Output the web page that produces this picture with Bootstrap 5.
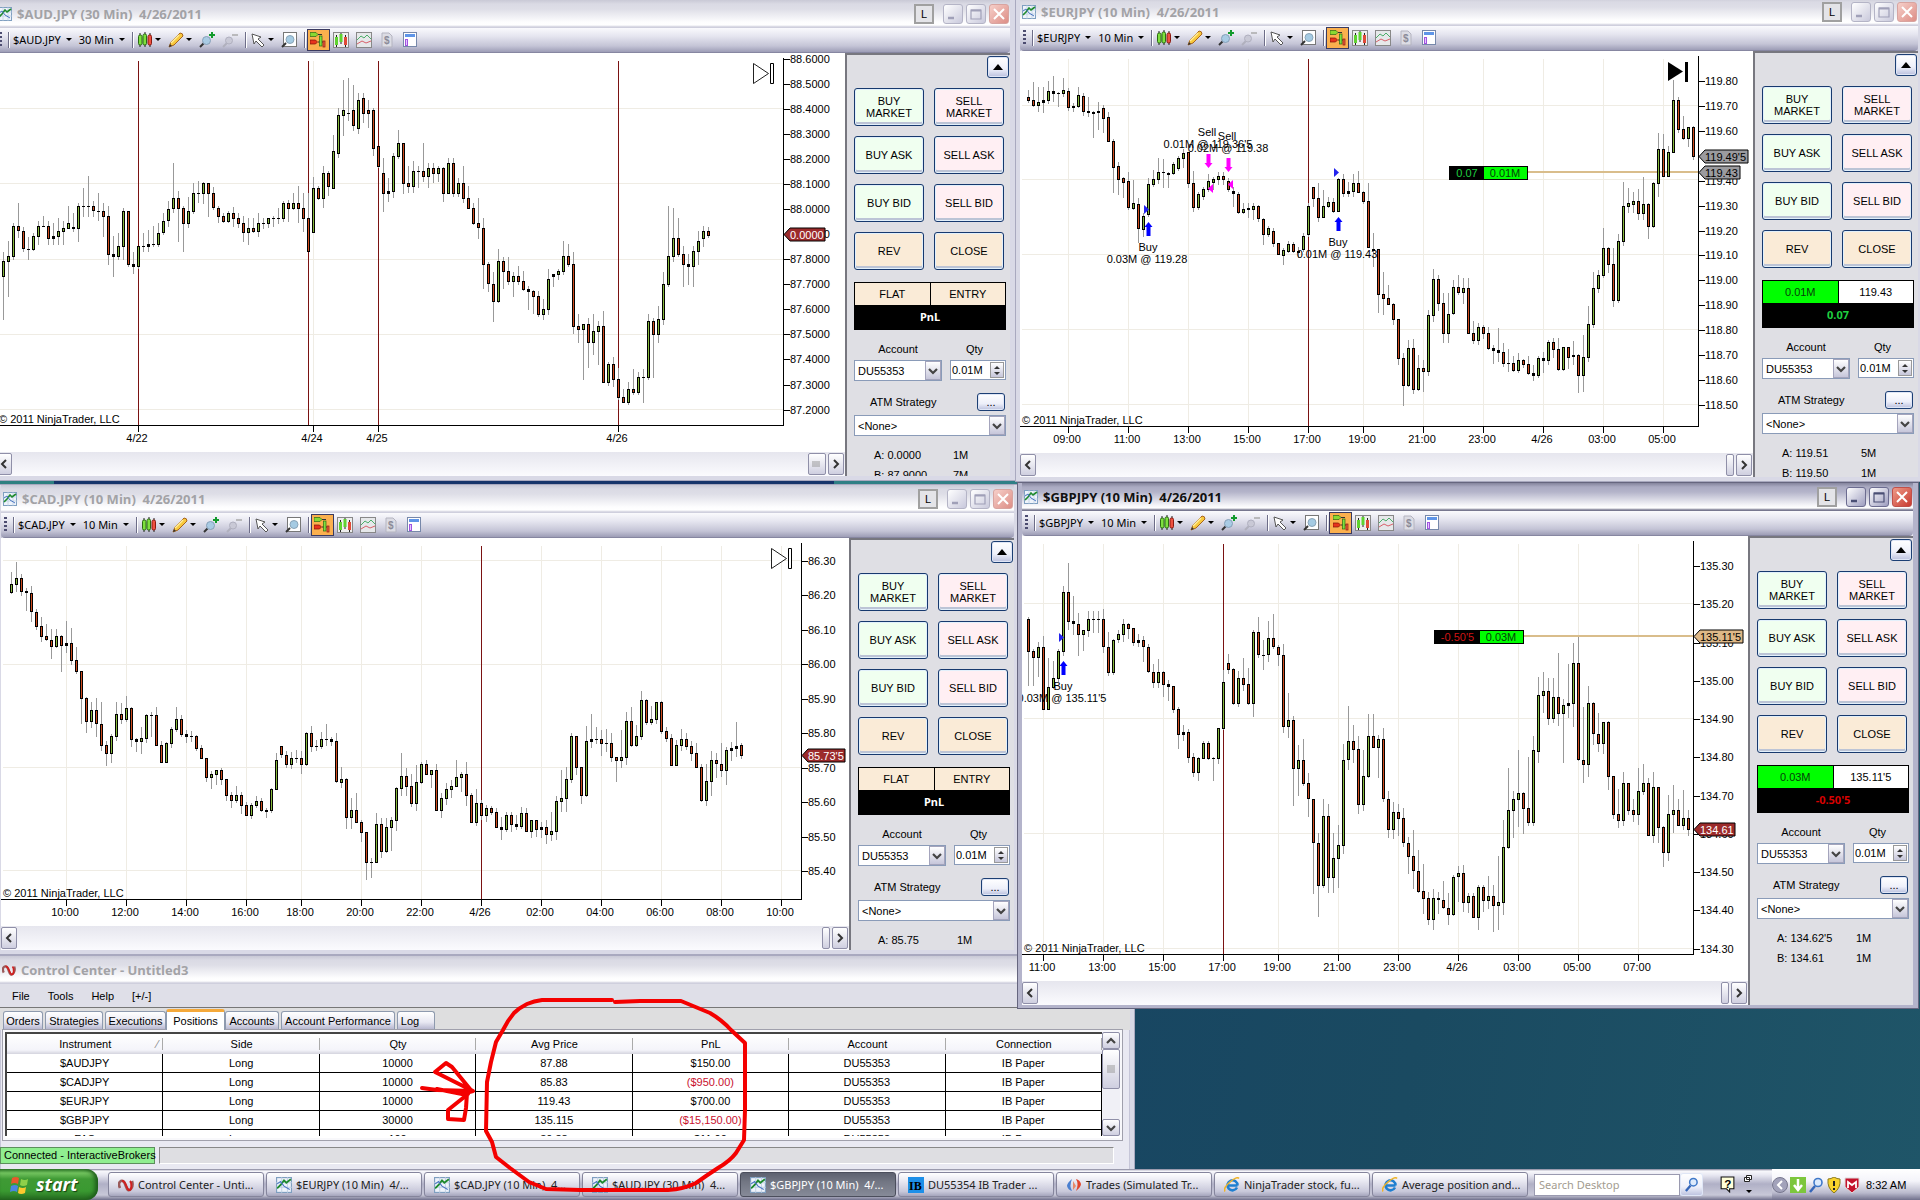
<!DOCTYPE html>
<html lang="en">
<head>
<meta charset="utf-8">
<meta name="viewport" content="width=device-width, initial-scale=1">
<title>Trading desktop</title>
<link href="https://cdn.jsdelivr.net/npm/bootstrap@5.3.0/dist/css/bootstrap.min.css" rel="stylesheet">
<style>
html,body{height:100%}
body{font:11px/12px "Liberation Sans",Arial,sans-serif;color:#000;background:#1c5168}
.desk{background:linear-gradient(100deg,#2e8080 0%,#2f7f86 52%,#184662 60%,#1a4a61 75%,#1f5568 100%)}
.strip{top:480px;left:54px;width:calc(50% - 180px);height:4px;background:#16346a}
.win{position:absolute;background:#e9e9f2;border:solid #d9d9e6;border-width:0 5px 4px 4px;box-shadow:inset 0 0 0 1px #c6c6d8,0 0 0 1px #a9a9bf}
.w-aud{left:-8px;top:0;width:calc(50% + 63px)}
.w-eur{left:calc(50% + 56px);top:-2px;right:-3px}
.w-cad{left:-3px;top:485px;width:calc(50% + 62px)}
.w-gbp{left:calc(50% + 58px);top:483px;right:2px;border-color:#b4b4cb;border-bottom-width:3px;box-shadow:0 0 0 1px #66667f}
.w-cc{left:0;top:956px;width:calc(50% + 174px);border-width:0 4px 0 0}
.tbar{height:28px;padding:0 1px 0 2px;background:linear-gradient(#c9c9d6 0,#dadae4 4px,#dedee7 9px,#fdfdfe 22px,#fff 25px,#cfcfdd 27px)}
.w-gbp .tbar{background:linear-gradient(#84849d 0,#aaaac2 4px,#b4b4ca 9px,#f4f4f8 22px,#fff 25px,#77778f 27px)}
.ttl{font:bold 13px/18px "Open Sans","Noto Sans",sans-serif;color:#a2a2a6;white-space:nowrap}
.w-gbp .ttl{color:#111}
.tico{width:14px;height:14px;margin-right:5px;flex:none}
.wbtn{width:20px;height:20px;padding:0;border:1px solid #b4b4c6;border-radius:3px;background:linear-gradient(135deg,#fff,#c9c9dc);color:#a0a0b8;display:flex;align-items:center;justify-content:center}
.wbtn svg{width:16px;height:16px}
.wbtn.lk{border:2px solid #a0a0a0;border-radius:0;background:#e4e4e8;color:#000;font-size:11px;margin-right:6px}
.wbtn.cls{background:linear-gradient(135deg,#f6cfc9,#dd8e86);border-color:#d8a4a0;color:#fff}
.w-gbp .wbtn:not(.lk){color:#4a4f74;border-color:#6c6c90;background:linear-gradient(135deg,#fff,#9d9dbf)}
.w-gbp .wbtn.cls{background:linear-gradient(135deg,#ee9a88,#c83a30);border-color:#c0504a;color:#fff}
.tools{height:25px;padding:0 0 2px 3px;background:linear-gradient(#fafafd 0,#e6e6f0 8px,#c4c4d6 18px,#9d9db6 24px,#70708c 25px);border-radius:0 0 4px 4px}
.tools button{border:0;background:none;padding:0;margin-right:7px;display:flex;align-items:center;color:#000;white-space:nowrap;font:11px/14px "Noto Sans","Open Sans",sans-serif}
.tools svg{width:16px;height:16px;display:block}
.tools .crt{width:0;height:0;border:3px solid transparent;border-top-color:#000;border-bottom:0;margin-left:2px}
.tools .txt .crt{margin-left:5px}
.tools .on{background:#fbb04e;border:1px solid #3a3a60;width:23px;height:22px;justify-content:center;margin-right:3px}
.vsep{width:2px;height:16px;margin-right:3px;border-left:1px solid #6d6d88;border-right:1px solid #fff}
.vsep.tight{margin-right:1px}
.grip{width:3px;height:15px;margin-right:6px;background:repeating-linear-gradient(#4c4c70 0 2px,transparent 2px 4px)}
.plot{display:block;width:100%;background:#fff}
.plot text{font:11px "Liberation Sans",Arial,sans-serif}
.hsb{height:24px;background:linear-gradient(#e6e6ee,#fbfbfe);gap:2px;padding-right:1px}
.sbb{border:1px solid #8f8fa8;border-radius:2px;background:linear-gradient(#fff,#cfcfe0);width:16px;height:22px;padding:0;display:flex;align-items:center;justify-content:center}
.sbb svg{width:10px;height:10px}
.thumb{width:8px}
.thumb.wide{width:18px}
.pnl-side{width:165px;flex:none;overflow:hidden;background:#dfdfe4;border-left:2px solid #77777f;border-top:2px solid #77777f;position:relative}
.pscroll{position:absolute;inset:1px 0 auto 7px}
.xpb{border:1px solid #1c3f74;border-radius:3px;background:linear-gradient(#fff,#eef0fa 60%,#b9bfdd);padding:0;box-shadow:inset 0 0 0 1px #dfe6f6}
.upb{width:22px;height:22px;margin-left:133px;display:flex;align-items:center;justify-content:center}
.ogrid{display:grid;grid-template-columns:70px 70px;gap:10px;margin-top:10px}
.obtn{height:38px;border:1px solid #17396e;border-radius:3px;padding:0;font-size:11px;line-height:12px;color:#000;box-shadow:inset 0 0 0 1px #e2f0fb,inset 0 -2px 0 1px #bcc4d6}
.buy{background:#f0fff0}.sell{background:#ffeff3}.wht{background:#faebd7}
.pos{width:152px;margin-top:12px;border:1px solid #000;text-align:center}
.pos>div>div{height:22px;line-height:22px;flex:1}
.pos>div>div+div{border-left:1px solid #000}
.pos .tot{background:#000;color:#fff;font:bold 11px/24px "Noto Sans","Open Sans",sans-serif;height:24px}
.lime{background:#0f0;color:#06410a}
.lb{line-height:14px}
.sel{position:relative}
.sel select,.qty input{appearance:none;width:100%;height:21px;border:1px solid #8a9bb8;border-radius:0;background:#fff;padding:0 0 0 3px;font-size:11px;line-height:14px;color:#000;display:block}
.sel i,.spin{position:absolute;right:1px;top:1px;width:16px;height:19px;border:1px solid #a4a4bc;background:linear-gradient(#fff,#c6c6da);pointer-events:none;display:flex;align-items:center;justify-content:center}
.sel svg{width:10px;height:10px}
.qty{position:relative;width:56px}
.qty input{height:20px;padding-left:1px}
.spin{top:2px;right:2px;width:14px;height:16px;border-color:#999;flex-direction:column;gap:3px}
.spin b{border:3px solid transparent;border-bottom-color:#333;border-top:0}
.spin b+b{border:3px solid transparent;border-top-color:#333;border-bottom:0}
.dots{width:28px;height:18px;line-height:10px}
.quote{display:grid;grid-template-columns:79px 40px;padding-left:20px;row-gap:6px;line-height:14px}
.menu{height:24px;padding-left:12px;background:#dfdfe8;border-bottom:1px solid #777;gap:18px}
.menu a{color:#000;text-decoration:none}
.tabs{height:22px;padding:3px 0 0 3px;gap:2px;background:#dededf}
.tabs button{height:18px;border:1px solid #8e9aae;border-bottom:0;border-radius:3px 3px 0 0;background:linear-gradient(#fff,#e8e8f2 60%,#b8b8d0);padding:0;text-align:center;white-space:nowrap}
.tabs .act{height:21px;margin:-2px -2px 0;border-top:3px solid #f5a93a;background:#fff;position:relative}
.gbox{margin:0 8px 0 3px;border:2px solid #f8f8fb;outline:1px solid #a0a0ac;height:110px;overflow:hidden;background:#fff}
.gin{border:solid #444;border-width:2px 0 0 2px;height:104px;overflow:hidden}
.pt{width:100%;table-layout:fixed;border-collapse:separate;border-spacing:0;text-align:center}
.pt th{font-weight:400;height:20px;padding:0;background:linear-gradient(#fff,#f4f4fa 80%,#d4d4de);position:relative}
.pt th::after{content:"";position:absolute;right:0;top:4px;height:12px;border-right:1px solid #aaa}
.pt th:first-child::before{content:"⁄";position:absolute;right:5px;color:#888}
.pt td{height:19px;padding:0;border:solid #000;border-width:0 1px 1px 0}
.pt .neg{color:#c8102e}
.vsb{width:18px;background:#f0f0f6;flex:none;height:104px}
.vsb .sbb{height:17px;width:18px}
.vsb .vt{height:40px}
.stat{height:17px;margin-top:7px}
.stat .ok{background:#90ee90;width:155px;padding-left:3px;line-height:15px;border:1px solid #5c8f5c;white-space:nowrap;flex:none}
.stat .rest{border:1px solid #888;border-right-color:#fff;border-bottom-color:#fff;background:#dedee2}
.bar{position:fixed;left:0;right:0;bottom:0;height:31px;background:linear-gradient(#7c7c94 0,#f8f8fc 2px,#e8e8f2 6px,#b0b0c6 15px,#c8c8d8 26px,#70708c 31px)}
.start{width:98px;height:31px;border:0;border-radius:0 12px 12px 0;background:linear-gradient(#3c8a34 0,#73c45f 4px,#3f9a35 10px,#3a9931 22px,#256a20 31px);box-shadow:inset -3px 0 4px #1d5b1a;color:#fff;font:italic bold 18px/24px "Open Sans",sans-serif;text-shadow:1px 1px 1px #144012;display:flex;align-items:center;gap:6px;padding:0 0 2px 10px;margin-right:10px;flex:none}
.start svg{width:20px;height:20px}
.task{flex:0 1 156px;min-width:0;height:25px;margin:3px 2px 0 0;border:1px solid #85859c;border-radius:3px;background:linear-gradient(#fff,#ececf4 30%,#c8c8da 80%,#a5a5bc);display:flex;align-items:center;gap:4px;padding:0 0 0 9px;white-space:nowrap;overflow:hidden;color:#222;font:11px/14px "Noto Sans","Open Sans",sans-serif}
.task svg{width:16px;height:16px;flex:none}
.task.cur{background:linear-gradient(#5d6170,#737784 40%,#868a98);color:#fff;border-color:#4b4e5c}
.srch{width:146px;height:22px;border:1px solid #9a9ab0;background:#fff;padding:0 4px;font:11px/14px "Noto Sans","Open Sans",sans-serif}
.srch::placeholder{color:#a39c90;opacity:1}
.tray{width:148px;height:31px;margin-left:auto;background:linear-gradient(#fff,#f4f4fa 12px,#b9b9cc 24px,#70708c);gap:2px;white-space:nowrap}
.tray svg{width:16px;height:16px}
.ink{position:fixed;inset:0;width:100%;height:100%;pointer-events:none;z-index:50}
</style>
<script src="https://cdn.jsdelivr.net/npm/bootstrap@5.3.0/dist/js/bootstrap.bundle.min.js"></script>
</head>
<body class="overflow-hidden">
<svg class="d-none">
<symbol id="chart" viewBox="0 0 14 14"><rect x=".5" y=".5" width="13" height="13" fill="#eef3fb" stroke="#7f9fc0"/><path d="M0 5h14M0 9h14M5 0v14M10 0v14" stroke="#b8cbe0" stroke-width=".7"/><path d="M1 10l3-3 3-4 2 2 4-3" fill="none" stroke="#1f8a2e" stroke-width="1.6"/><path d="M1 6l3-2 3 4 5 3" fill="none" stroke="#4b76c2"/></symbol>
<symbol id="cand" viewBox="0 0 16 16"><path d="M3 1v14M8 0v15M13 1v14" stroke="#222"/><rect x="1.500" y="3" width="3.500" height="10" rx="1.500" fill="#7ee03e" stroke="#2b6b12"/><rect x="6" y="2" width="3.500" height="11" rx="1.500" fill="#7ee03e" stroke="#2b6b12"/><rect x="11" y="3" width="3.500" height="10" rx="1.500" fill="#ef5040" stroke="#8a1a10"/></symbol>
<symbol id="pen" viewBox="0 0 16 16"><path d="M1 15l2-5L12 1q3 0 3 3L6 13z" fill="#f8c93e" stroke="#a8641c"/><path d="M3 11l8-8" stroke="#fff0a0" stroke-width="1.500"/><path d="M1 15l1-3 2 2z" fill="#333"/></symbol>
<symbol id="zin" viewBox="0 0 16 16"><path d="M1 15l4-4" stroke="#333" stroke-width="2"/><circle cx="7.500" cy="8.500" r="4" fill="#a9cbe4" stroke="#86a0b8"/><path d="M13 0v6M10 3h6" stroke="#129a2c" stroke-width="2"/></symbol>
<symbol id="zout" viewBox="0 0 16 16"><path d="M1 15l4-4" stroke="#b0b0bd" stroke-width="2"/><circle cx="7" cy="8.500" r="3.500" fill="#c9c9d6" stroke="#b0b0bf"/><path d="M10 3h6" stroke="#aaa" stroke-width="1.500"/></symbol>
<symbol id="cur" viewBox="0 0 16 16"><path d="M2 2l9 3-3 2 6 6-2 2-6-6-2 3z" fill="#fff" stroke="#555"/></symbol>
<symbol id="page" viewBox="0 0 16 16"><rect x="2.500" y=".5" width="13" height="14" fill="#fff" stroke="#777"/><path d="M1 15l4-4" stroke="#333" stroke-width="2"/><circle cx="9" cy="7.500" r="4" fill="#a5cbe3" stroke="#8aa4b8"/></symbol>
<symbol id="trade" viewBox="0 0 16 16"><path d="M0 .5h6l2 2-2 2H0z" fill="#8ad832" stroke="#2a6a10" stroke-width=".7"/><path d="M0 8h5.500l2 2-2 2H0z" fill="#e8331c" stroke="#7a1208" stroke-width=".7"/><path d="M8 2.500h4M8 10h5" stroke="#333"/><rect x="9.500" y="4" width="2.500" height="10" fill="#7ee03e" stroke="#2b6b12" stroke-width=".7"/><rect x="13" y="9" width="2" height="6" fill="#ef6040" stroke="#8a1a10" stroke-width=".7"/></symbol>
<symbol id="cbox" viewBox="0 0 16 16"><rect x=".5" y=".5" width="15" height="15" fill="#eee" stroke="#888"/><path d="M3.500 3v12M8 1v11M12.500 3v12" stroke="#222"/><rect x="2" y="5" width="3" height="8" fill="#5fd230"/><rect x="6.500" y="2" width="3" height="8" fill="#5fd230"/><rect x="11" y="5" width="3" height="8" fill="#e04a38"/></symbol>
<symbol id="lines" viewBox="0 0 16 16"><rect x=".5" y=".5" width="15" height="15" fill="#e6e8ea" stroke="#888"/><path d="M1 8l4-4 3 2 3-3 4 4" fill="none" stroke="#4cae6a"/><path d="M1 12l5-3 4 2 5-2" fill="none" stroke="#d8606a"/></symbol>
<symbol id="dol" viewBox="0 0 16 16"><path d="M3 1h7l3 3v11H3z" fill="#dcdce4" stroke="#b4b4c0"/><text x="5" y="12" font-size="10" font-weight="bold" fill="#8b8b98" font-family="Liberation Sans">$</text></symbol>
<symbol id="lay" viewBox="0 0 16 16"><rect x="1.500" y=".5" width="13" height="14" fill="#fff" stroke="#7788aa"/><rect x="3" y="2" width="10" height="3" fill="#5f95e8"/><rect x="3.500" y="7.500" width="2" height="6" fill="#e6c6ff" stroke="#a054e0"/></symbol>
<symbol id="cl" viewBox="0 0 10 10"><path d="M7 1L3 5l4 4" fill="none" stroke="#333" stroke-width="2"/></symbol>
<symbol id="cr" viewBox="0 0 10 10"><path d="M3 1l4 4-4 4" fill="none" stroke="#333" stroke-width="2"/></symbol>
<symbol id="cd" viewBox="0 0 10 10"><path d="M1 3l4 4 4-4" fill="none" stroke="#444" stroke-width="2.200"/></symbol>
<symbol id="cu" viewBox="0 0 10 10"><path d="M1 7l4-4 4 4" fill="none" stroke="#444" stroke-width="2.200"/></symbol>
<symbol id="mn" viewBox="0 0 16 16"><path d="M3 12h6" stroke="currentColor" stroke-width="2.500"/></symbol>
<symbol id="mx" viewBox="0 0 16 16"><path d="M3 4h10v9H3z" fill="none" stroke="currentColor" stroke-width="1.200"/><path d="M3 4.500h10" stroke="currentColor" stroke-width="2"/></symbol>
<symbol id="x" viewBox="0 0 16 16"><path d="M3 3l10 10M13 3L3 13" stroke="currentColor" stroke-width="2"/></symbol>
<symbol id="nt" viewBox="0 0 16 16"><path d="M2 11C-1 5 4 2 6 5s2 7 4 8 6-3 4-9" fill="none" stroke="#9a5a5a" stroke-width="2.600"/><path d="M4 4c4-1 4 8 7 9s3-7 1-9" fill="none" stroke="#d02020" stroke-width="2"/></symbol>
<symbol id="ie" viewBox="0 0 16 16"><path d="M13.500 8.500H4.500M13 10.500a5 5 0 1 1 .5-2" fill="none" stroke="#1f7fd0" stroke-width="2.600"/><path d="M1 14.500Q-1 11 6 5T15 1.500" fill="none" stroke="#f0b429" stroke-width="1.600"/></symbol>
<symbol id="ib" viewBox="0 0 16 16"><rect width="16" height="16" fill="#1d8fe8"/><text x="1" y="13" font-size="12" font-weight="bold" font-family="Liberation Serif">IB</text></symbol>
<symbol id="tr" viewBox="0 0 16 16"><path d="M6 2q-5 4-5 7 1 4 5 5-3-5 0-12z" fill="#4a7fd0"/><path d="M10 14q5-4 5-7-1-4-5-5 3 5 0 12z" fill="#e2452c"/><path d="M7 4l3 5-3 4z" fill="#e8896a"/></symbol>
<symbol id="win" viewBox="0 0 20 20"><path d="M2 4q4-2 7 0l-1 6q-4-2-7 0z" fill="#e8582c"/><path d="M11 5q4 2 7 0l-1 6q-4 2-7 0z" fill="#8fd04a"/><path d="M1 12q4-2 7 0l-1 6q-3-2-7 0z" fill="#4a86e0"/><path d="M9 13q4 2 7 0l-1 6q-4 2-7 0z" fill="#fcc92e"/></symbol>
<symbol id="lens" viewBox="0 0 16 16"><path d="M2 15l5-6" stroke="#3566b8" stroke-width="2.500"/><circle cx="10" cy="5.500" r="4" fill="#dceafc" stroke="#3f78c8" stroke-width="1.600"/></symbol>
<symbol id="hlp" viewBox="0 0 16 16"><path d="M2 1h12v11h-4v3l-3-3H2z" fill="#ffffd8" stroke="#111"/><text x="5" y="11" font-size="11" font-weight="bold" font-family="Liberation Sans">?</text></symbol>
<symbol id="chv" viewBox="0 0 16 16"><circle cx="8" cy="8" r="7.500" fill="#a2a2ba" stroke="#77778e"/><path d="M10 4L6 8l4 4" fill="none" stroke="#fff" stroke-width="2"/></symbol>
<symbol id="dn" viewBox="0 0 16 16"><rect width="16" height="16" fill="#7cc63c"/><path d="M8 2v9M4 8l4 5 4-5" stroke="#fff" stroke-width="2.500" fill="none"/></symbol>
<symbol id="shy" viewBox="0 0 16 16"><path d="M8 0q3 2 6 2 1 9-6 14Q1 11 2 2q3 0 6-2z" fill="#f8d22c" stroke="#8a7a1c"/><path d="M8 4v5M8 11v2" stroke="#222" stroke-width="2"/></symbol>
<symbol id="shm" viewBox="0 0 16 16"><path d="M1 1h14v9l-7 6-7-6z" fill="#c4122c" stroke="#ddd"/><path d="M4 11V5l4 3 4-3v6" fill="none" stroke="#fff" stroke-width="1.800"/></symbol>
</svg>

<main class="desk position-relative vh-100 overflow-hidden" id="desk">
<div class="strip position-absolute"></div>
<section class="win w-cc">
 <header class="tbar d-flex align-items-center"><svg class="tico"><use href="#nt"/></svg><span class="ttl">Control Center - Untitled3</span></header>
 <nav class="menu d-flex align-items-center"><a href="#">File</a><a href="#">Tools</a><a href="#">Help</a><a href="#">[+/-]</a></nav>
 <div class="tabs d-flex">
  <button style="width:40px">Orders</button><button style="width:58px">Strategies</button><button style="width:61px">Executions</button><button class="act" style="width:59px">Positions</button><button style="width:54px">Accounts</button><button style="width:114px">Account Performance</button><button style="width:38px;padding-right:12px">Log</button>
 </div>
 <div class="gbox d-flex"><div class="gin flex-fill"><table class="pt"><thead><tr><th>Instrument</th><th>Side</th><th>Qty</th><th>Avg Price</th><th>PnL</th><th>Account</th><th>Connection</th></tr></thead>
 <tbody>
 <tr><td>$AUDJPY</td><td>Long</td><td>10000</td><td>87.88</td><td>$150.00</td><td>DU55353</td><td>IB Paper</td></tr>
 <tr><td>$CADJPY</td><td>Long</td><td>10000</td><td>85.83</td><td class="neg">($950.00)</td><td>DU55353</td><td>IB Paper</td></tr>
 <tr><td>$EURJPY</td><td>Long</td><td>10000</td><td>119.43</td><td>$700.00</td><td>DU55353</td><td>IB Paper</td></tr>
 <tr><td>$GBPJPY</td><td>Long</td><td>30000</td><td>135.115</td><td class="neg">($15,150.00)</td><td>DU55353</td><td>IB Paper</td></tr>
 <tr><td>FAS</td><td>Long</td><td>100</td><td>30.38</td><td>$11.00</td><td>DU55353</td><td>IB Paper</td></tr>
 </tbody></table></div>
 <div class="vsb d-flex flex-column"><button class="sbb" aria-label="Up"><svg><use href="#cu"/></svg></button><span class="sbb vt"><svg><path d="M1 2h8M1 4h8M1 6h8M1 8h8" stroke="#999"/></svg></span><button class="sbb mt-auto" aria-label="Down"><svg><use href="#cd"/></svg></button></div></div>
 <div class="stat d-flex"><div class="ok">Connected - InteractiveBrokers</div><div class="rest flex-fill ms-1 me-3"></div></div>
 <div class="pt-2"></div>
</section>
</main>

<footer class="bar d-flex align-items-start">
 <button class="start"><svg><use href="#win"/></svg>start</button>
 <button class="task"><svg><use href="#nt"/></svg>Control Center - Unti...</button>
 <button class="task"><svg><use href="#chart"/></svg>$EURJPY (10 Min)&nbsp; 4/...</button>
 <button class="task"><svg><use href="#chart"/></svg>$CAD.JPY (10 Min)&nbsp; 4...</button>
 <button class="task"><svg><use href="#chart"/></svg>$AUD.JPY (30 Min)&nbsp; 4...</button>
 <button class="task cur"><svg><use href="#chart"/></svg>$GBPJPY (10 Min)&nbsp; 4/...</button>
 <button class="task"><svg><use href="#ib"/></svg>DU55354 IB Trader ...</button>
 <button class="task"><svg><use href="#tr"/></svg>Trades (Simulated Tr...</button>
 <button class="task"><svg><use href="#ie"/></svg>NinjaTrader stock, fu...</button>
 <button class="task"><svg><use href="#ie"/></svg>Average position and...</button>
 <div class="d-flex align-items-center h-100 ms-1"><input class="srch" aria-label="Search Desktop" placeholder="Search Desktop"><button class="xpb border-0 px-1 h-75" aria-label="Search"><svg width="15" height="15"><use href="#lens"/></svg></button></div>
 <div class="d-flex align-items-center h-100 ms-3 gap-2"><svg width="17" height="17"><use href="#hlp"/></svg><svg width="9" height="24"><path d="M2.500 2.500h5v4h-5zM.5 4.500h5v4h-5z" fill="#fff" stroke="#222"/><path d="M2 17h6l-3 3z"/></svg></div>
 <div class="tray d-flex align-items-center"><svg><use href="#chv"/></svg><svg><use href="#dn"/></svg><svg><use href="#lens"/></svg><svg><use href="#shy"/></svg><svg><use href="#shm"/></svg><span class="ms-1">8:32 AM</span></div>
</footer>

<svg class="ink" fill="none" stroke="#f40000" stroke-width="4" stroke-linecap="round" stroke-linejoin="round">
 <path d="M612 1000H542Q534 1001 527 1004Q519 1008 514 1013Q508 1020 503 1030L496 1042L491 1062L487 1082L486 1131L492 1142L496 1157L510 1168L529 1182L546 1189L580 1190H668Q684 1189 696 1183L706 1176L718 1168Q730 1161 736 1153L744 1140L745 1110L745 1043L731 1030Q722 1020 710 1013L681 1001H640L615 1002"/>
 <path d="M422 1088L437 1090L473 1091L435 1072L446 1063L452 1067L470 1089M437 1089L462 1094L473 1091M467 1093L466 1108L464 1120L448 1119L448 1110L468 1094"/>
</svg>

<script>
// Candles: "high,bodyTop,bodyBottom,low" in units of 1/k pixel; g = up, r = down, n = flat
const charts=[
{cls:'w-aud',title:'$AUD.JPY (30 Min)\u00a0 4/26/2011',sym:'$AUD.JPY',per:'30 Min',ox:-4,oy:53,h:399,cx:0,cy:0,k:3,x0:10,
 axX:783,axTop:58,axY:425,ly:442,y0:59,step:25.04,p0:88.6,dp:-.1,dec:4,n:15,hg:[108,183,259,334,409],
 vg:[313],red:[138,308,378,618],xl:[[138,'4/22'],[313,'4/24'],[378,'4/25'],[618,'4/26']],wide:1,play:[753,63,0],
 tags:[[234,'0.0000','#9c2b2b','#fff',42]],ask:'0.0000',as:'1M',bid:'87.9000',bs:'7M',cr:0,
 d:`755,784,830,960g 722,768,785,890g 670,678,770,780g 608,678,694,715r 680,693,748,755r 710,747,750,780n 700,708,749,752g 662,678,710,735g 648,678,681,682n 662,678,716,734r 668,708,717,734g 655,693,710,735g 662,684,695,735g 618,669,686,688g 640,680,686,695r 610,618,686,725g 565,618,621,650n 528,618,621,650n 603,618,634,650r 580,633,636,664n 610,633,650,710r 618,648,766,795r 708,762,770,830g 700,738,770,780g 625,633,740,780g 633,633,795,802r 755,792,800,822r 738,738,800,808g 700,738,741,755n 690,732,740,755g 678,732,735,740n 668,699,735,740g 640,662,700,705g 603,626,664,680g 488,594,626,640g 573,594,626,725r 618,624,671,755r 590,633,671,685g 550,579,635,642g 542,579,581,610n 545,549,581,612g 549,549,581,650r 560,579,625,630r 618,625,650,670r 640,648,665,670r 632,639,665,668g 622,639,656,680r 640,654,671,685r 648,669,700,725r 655,684,700,735g 655,684,695,700r 640,669,695,710g 655,669,671,688n 654,655,671,685g 648,654,657,680n 625,654,657,672n 603,609,656,665g 600,609,626,665r 580,609,626,630g 558,609,626,670r 578,624,656,695r 578,654,755,755r 532,564,700,700g 558,564,597,600r 497,519,597,625g 512,519,560,588r 405,453,566,568g 325,345,461,475g 240,330,348,408g 234,339,342,362n 255,330,378,392r 280,300,386,402g 280,294,341,370r 300,330,342,385r 325,330,446,468r 438,438,500,505r 475,519,581,635r 535,573,581,605g 458,468,575,595g 390,430,470,478g 430,430,551,582r 498,549,560,580r 482,513,560,580g 498,513,516,565n 430,513,530,545r 488,504,530,565g 488,504,521,548r 498,504,521,545g 500,504,581,605r 473,489,581,582g 475,489,581,590r 535,549,581,590g 498,549,597,608r 558,594,626,628r 610,624,671,675r 594,669,685,718r 655,684,795,868r 785,792,853,875r 815,852,905,965r 748,783,905,908g 770,783,815,868r 770,813,846,855r 815,828,846,890g 797,828,846,855r 812,843,870,872r 858,867,875,930r 870,873,890,942r 872,888,945,950r 898,927,945,960g 808,837,930,945g 822,822,830,860g 808,813,825,840g 724,768,815,825g 732,768,795,800r 755,792,980,1003r 942,978,990,1028r 972,972,990,1140g 955,972,1028,1105r 942,993,1028,1065g 962,978,995,1095g 933,978,1148,1150r 1085,1092,1148,1158g 1070,1092,1140,1162r 1105,1137,1194,1200r 1168,1191,1208,1210r 1145,1167,1208,1215g 1108,1167,1179,1185r 1115,1131,1179,1185g 1108,1131,1134,1210n 942,963,1134,1140g 955,963,1005,1133r 918,957,1005,1028g 815,852,960,975g 618,768,855,860g 625,714,770,785g 655,714,765,770r 738,762,795,860r 762,792,800,855r 738,753,800,860g 693,723,755,795g 678,693,717,740g 680,693,709,715r`},
{cls:'w-eur',title:'$EURJPY (10 Min)\u00a0 4/26/2011',sym:'$EURJPY',per:'10 Min',ox:1020,oy:51,h:402,cx:1010,cy:0,k:3,x0:55,
 axX:1698,axTop:56,axY:426,ly:443,y0:81,step:24.92,p0:119.8,dp:-.1,dec:2,n:14,hg:[105,179,254,329,404],
 vg:[1068,1128,1188,1248,1363,1423,1483,1543,1603,1663],red:[1308],xl:[[1068,'09:00'],[1128,'11:00'],[1188,'13:00'],[1248,'15:00'],[1308,'17:00'],[1363,'19:00'],[1423,'21:00'],[1483,'23:00'],[1543,'4/26'],[1603,'03:00'],[1663,'05:00']],play:[1668,62,1],
 tags:[[156,"119.49'5",'#9b9b9f','#000',50],[172,'119.43','#9b9b9f','#000',42]],line:[172,1449,'0.07','#1fd040','0.01M',34],
 marks:[['b',1148,222,'0.03M @ 119.28',251,209,1145],['b',1338,217,'0.01M @ 119.43',246,172,1335],['s',1208,168,"0.01M @ 119.36'5",136,188,1211],['s',1228,172,'0.02M @ 119.38',140,184,1231]],
 pos:['0.01M','119.43','0.07','#1fd040'],ask:'119.51',as:'5M',bid:'119.50',bs:'1M',
 d:`270,291,303,308r 245,300,317,322r 262,306,317,335g 260,300,308,340g 243,273,302,312g 228,273,281,305r 275,278,281,322n 235,270,281,290g 265,273,323,332r 308,318,324,335g 262,285,320,325g 278,288,335,347r 290,333,339,352r 333,336,341,415n 305,333,339,390g 315,324,356,400r 335,351,425,427r 417,423,503,578r 485,498,539,585r 530,534,548,595r 517,543,625,630r 540,609,626,630g 595,612,686,728r 640,648,689,710g 535,552,644,650g 510,537,555,560g 475,516,540,552g 478,516,519,565n 515,519,524,565n 485,492,521,525g 468,474,506,512g 448,459,476,505g 455,457,551,565r 512,549,623,635r 575,582,623,630g 562,567,590,600g 523,543,570,575g 530,537,548,570g 517,528,539,555g 515,528,539,555r 535,543,570,575r 560,573,582,620r 575,582,638,642r 608,627,638,642g 610,624,630,655n 610,618,630,660g 615,618,658,665r 655,657,705,735r 678,684,705,712g 685,693,731,740r 728,729,765,765r 745,750,767,795g 722,732,756,760g 725,732,756,758r 740,753,759,775n 700,708,750,755g 610,618,704,710g 562,562,596,622r 550,594,653,665r 570,618,653,655g 590,606,620,625g 595,606,635,638r 535,537,635,637g 522,537,582,590r 545,573,582,592g 522,549,575,592g 512,549,578,580r 572,576,605,612r 548,603,743,745r 700,746,752,800r 748,748,885,938r 815,882,896,945r 855,894,914,916r 908,912,960,975r 957,958,1076,1095r 1060,1074,1157,1217r 1020,1044,1157,1160g 1017,1044,1170,1183r 1065,1104,1170,1172g 1080,1104,1115,1175r 930,945,1115,1128g 808,837,947,967g 825,837,911,933r 880,909,1001,1028r 880,941,1001,1028g 840,861,943,945g 825,861,879,885r 835,864,879,912g 835,864,1001,1002r 962,999,1022,1032r 968,981,1022,1035g 975,981,1001,1018r 982,999,1046,1050r 1035,1044,1052,1092r 985,1050,1058,1085r 1028,1056,1091,1102r 1048,1089,1092,1115n 1068,1089,1112,1115r 1058,1080,1112,1120g 1078,1080,1095,1105r 1068,1092,1121,1125r 1095,1119,1128,1142r 1068,1074,1128,1135g 1055,1074,1082,1120r 1020,1026,1082,1095g 1015,1026,1049,1075r 1015,1047,1109,1112r 1042,1042,1109,1112g 1040,1042,1074,1108r 1022,1065,1072,1095g 1062,1065,1128,1180r 1005,1071,1128,1175g 918,972,1074,1085g 815,864,974,985g 810,825,866,880g 685,744,827,835g 742,744,795,818r 745,792,903,922r 702,723,903,908g 545,618,725,738g 565,609,620,640g 577,603,614,640g 568,603,641,660r 532,612,641,660g 610,612,681,717r 545,549,681,685g 400,447,551,590g 402,447,530,532r 437,456,530,532g 240,300,458,460g 290,300,389,398r 348,387,416,420r 380,381,416,442g 378,381,470,480r`},
{cls:'w-cad',title:'$CAD.JPY (10 Min)\u00a0 4/26/2011',sym:'$CAD.JPY',per:'10 Min',ox:1,oy:538,h:388,cx:0,cy:475,k:3,x0:35,
 axX:801,axTop:543,axY:899,ly:916,y0:561,step:34.44,p0:86.3,dp:-.1,dec:2,n:10,hg:[560,664,767,870],
 vg:[66,126,186,246,301,361,421,541,601,661,721,781],red:[481],xl:[[66,'10:00'],[126,'12:00'],[186,'14:00'],[246,'16:00'],[301,'18:00'],[361,'20:00'],[421,'22:00'],[481,'4/26'],[541,'02:00'],[601,'04:00'],[661,'06:00'],[721,'08:00'],[781,'10:00']],play:[771,548,0],
 tags:[[755,"85.73'5",'#9c2b2b','#fff',44]],ask:'85.75',as:'1M',bid:'85.73',bs:'1M',
 d:`292,327,355,357g 262,309,329,350g 297,309,350,362r 340,348,355,407r 333,354,411,440r 403,411,455,465r 427,453,486,500r 447,483,496,497r 462,495,516,553r 462,483,516,520g 480,483,513,590r 438,504,512,535g 460,504,557,570r 515,555,590,598r 588,588,671,748r 665,669,740,775r 682,705,740,760g 670,705,748,785r 682,747,812,828r 798,810,836,872r 778,783,836,865g 682,717,786,798g 685,717,735,748r 662,699,735,740g 695,699,794,815r 790,792,801,830r 755,789,801,837g 718,720,792,805g 712,720,723,785n 697,720,812,812r 797,810,863,864r 800,804,863,864g 755,762,806,820g 697,732,765,770g 720,732,779,785r 765,777,785,805r 768,783,786,800n 780,783,821,828r 810,819,851,852r 848,849,908,920r 887,897,908,942g 885,885,899,930g 878,885,914,930r 912,912,962,978r 950,960,978,1000r 932,960,978,985g 950,960,992,1018r 980,990,1022,1023r 985,990,1022,1033g 962,978,992,1000g 970,978,1007,1010r 1000,1005,1010,1028n 940,942,1007,1015g 835,855,944,945g 812,813,840,850r 828,840,870,880r 830,849,870,882g 825,849,852,865n 828,849,870,897r 772,774,870,872g 752,774,815,830r 795,813,816,828n 772,792,815,822g 748,792,795,812n 785,792,800,812r 773,798,922,923r 875,912,923,940g 910,912,1028,1062r 970,1005,1028,1062g 955,1005,1043,1045r 1035,1041,1074,1100r 1072,1072,1163,1214r 1150,1162,1165,1210n 1015,1047,1163,1165g 1028,1047,1131,1150r 1030,1056,1131,1135g 1025,1035,1058,1128g 937,939,1037,1068g 835,903,941,962g 878,903,935,962r 897,933,986,995r 870,921,986,1008g 862,867,923,928g 855,867,899,900r 885,885,899,940g 868,885,1007,1008r 955,969,1007,1028g 925,942,971,990g 915,933,944,968g 855,906,935,935g 890,897,908,950g 862,897,962,992r 955,960,1043,1045r 943,984,1043,1053g 975,984,1022,1035r 990,999,1022,1042g 993,999,1013,1020r 1000,1011,1058,1060r 1025,1056,1064,1095r 1010,1020,1064,1070g 1012,1020,1049,1070r 1020,1047,1055,1065r 995,1014,1055,1062g 1000,1014,1070,1072r 1035,1035,1070,1090g 1035,1035,1064,1085r 1040,1056,1064,1090g 1035,1056,1080,1108r 1010,1068,1080,1097g 962,978,1071,1095g 885,969,980,1012g 875,912,971,1012g 775,783,914,923g 783,783,878,900r 875,877,962,987r 753,798,962,965g 717,792,800,818g 755,792,795,808n 765,792,806,842r 762,804,807,830n 775,804,849,860r 845,846,857,920r 765,846,857,880g 712,738,849,870g 697,738,812,815r 750,783,812,815g 648,675,786,795g 672,675,743,750r 693,732,743,750g 680,681,735,748g 678,681,770,778r 757,768,791,800r 778,789,872,873r 795,810,872,872g 762,792,812,828g 775,792,815,825r 798,813,836,858r 805,834,878,880r 868,876,977,980r 868,918,977,992g 828,855,920,962g 835,855,867,908r 805,867,887,905r 815,825,887,930g 800,819,827,857g 740,813,822,845g 805,810,842,852r`},
{cls:'w-gbp',title:'$GBPJPY (10 Min)\u00a0 4/26/2011',sym:'$GBPJPY',per:'10 Min',ox:1022,oy:536,h:445,cx:1010,cy:475,k:2.904,x0:55,
 axX:1693,axTop:541,axY:954,ly:971,y0:566,step:38.26,p0:135.3,dp:-.1,dec:2,n:11,hg:[603,718,833,948],
 vg:[1043,1103,1163,1278,1338,1398,1458,1518,1578,1638],red:[1223],xl:[[1043,'11:00'],[1103,'13:00'],[1163,'15:00'],[1223,'17:00'],[1278,'19:00'],[1338,'21:00'],[1398,'23:00'],[1458,'4/26'],[1518,'03:00'],[1578,'05:00'],[1638,'07:00']],
 tags:[[636,"135.11'5",'#deb887','#000',50],[829,'134.61','#9c2b2b','#fff',42]],line:[636,1434,"-0.50'5",'#d01515','0.03M',45],
 marks:[['b',1063,661,"0.03M @ 135.11'5",690,637,1060]],
 pos:['0.03M',"135.11'5","-0.50'5",'#d80000'],ask:"134.62'5",as:'1M',bid:'134.61',bs:'1M',
 d:`412,418,514,612r 505,511,530,612r 485,499,530,587g 468,499,681,683r 530,617,681,682g 540,589,620,622g 505,511,592,602g 322,340,514,525g 256,340,427,450r 352,424,434,465r 402,433,465,525r 450,451,465,512g 395,418,453,470g 395,418,421,460n 395,418,421,460n 390,418,500,518r 457,499,575,585r 475,480,575,580g 450,462,480,488g 418,433,464,485g 430,433,446,475r 445,445,487,498r 462,480,488,500g 468,480,500,542r 490,499,573,575r 550,572,603,618r 535,572,603,620g 570,572,609,645r 595,607,615,655r 612,613,681,690r 675,679,754,797r 725,745,754,773g 737,745,822,835r 808,820,865,877r 820,822,865,890g 772,778,824,825g 772,778,824,828r 820,822,825,888n 735,736,824,840g 565,601,738,740g 520,546,565,578r 560,562,664,668r 570,589,664,675g 530,589,609,628r 560,607,664,668r 450,457,664,702g 412,457,524,530r 480,523,526,565n 425,474,524,542g 405,474,500,505r 495,499,524,555r 490,523,731,748r 632,712,731,765g 700,711,853,962r 785,828,853,932g 768,828,896,902r 865,895,942,993r 940,942,1070,1218r 1040,1069,1193,1285r 940,990,1193,1198g 955,990,1169,1213r 1040,1111,1169,1213g 1015,1075,1114,1198g 780,829,1076,1100g 670,772,829,858g 725,772,798,837r 757,796,957,985r 800,874,957,977g 695,758,877,880g 695,758,792,793r 755,767,792,880g 735,767,942,950r 918,942,1031,1053r 950,979,1031,1058g 955,979,998,1048r 967,996,1069,1080r 1050,1069,1108,1158r 1030,1106,1151,1203r 1088,1150,1210,1213r 1130,1208,1230,1275r 1210,1228,1291,1308r 1203,1228,1291,1320g 1212,1228,1235,1275r 1180,1234,1258,1260r 1215,1257,1277,1308r 1162,1167,1277,1280g 1135,1156,1168,1240g 1132,1156,1242,1270r 1215,1222,1242,1272g 1213,1222,1286,1287r 1190,1195,1286,1320g 1190,1195,1236,1270r 1165,1222,1236,1260g 1190,1222,1252,1327r 1105,1240,1252,1320g 1003,1081,1242,1277g 850,973,1083,1087g 918,940,975,1053g 800,923,943,1023g 922,923,969,1042r 820,967,1010,1018r 757,800,1010,1018g 588,640,803,835g 572,627,641,692g 590,627,709,725r 590,645,709,720g 517,645,693,730r 650,668,693,835g 550,662,670,705g 487,546,664,732g 470,546,829,830r 675,828,841,895r 612,662,841,877g 660,662,753,785r 692,752,780,803r 717,717,780,810g 715,717,876,915r 875,875,986,998r 912,984,1004,1025r 862,895,1004,1018g 893,895,975,987r 940,973,986,1008r 850,918,986,1017g 840,895,920,930g 880,895,1047,1048r 862,906,1047,1070g 905,906,1024,1070r 1020,1022,1098,1137r 930,984,1098,1120g 900,973,986,1040g 940,973,1018,1020r 915,996,1018,1030g 973,996,1030,1047r`}
];
const R=(x,y,w,h,f)=>`<rect x="${x}" y="${y}" width="${w}" height="${h}" fill="${f}"/>`;
const T=(x,y,s,a='start',f='#000')=>`<text x="${x}" y="${y}" text-anchor="${a}" fill="${f}">${s}</text>`;
function plot(c){
 let s='';
 const right=c.axX, H=c.axY-c.axTop-3;
 c.hg.forEach(y=>s+=R(c.ox+2,y,right-c.ox-2,1,'#efece4'));
 c.vg.forEach(x=>s+=R(x,c.axTop+3,1,H,'#efece4'));
 c.red.forEach(x=>s+=R(x,c.axTop+3,1,H,'#7a1212'));
 if(c.line)s+=R(c.line[1]+78,c.line[0]-1,right-c.line[1]-78,2,'#d9bd8b');
 c.d.split(' ').forEach((k,i)=>{
  const v=k.slice(0,-1).split(',').map(n=>Math.round(n/c.k)+c.cy), t=k.slice(-1), x=Math.floor((c.x0+15*i)/3)+c.cx;
  s+=R(x,v[0],1,Math.max(1,v[3]-v[0]),'#999');
  const b=Math.max(1,v[2]-v[1]);
  s+=R(x-1,v[1],3,b,'#000');
  if(t!='n'&&b>3)s+=R(x,v[1]+1,1,b-2,t=='g'?'#86b83a':'#cf4a1c');
 });
 s+=T(c.ox+(c.ox<0?3:2),c.axY-2,'© 2011 NinjaTrader, LLC');
 s+=R(c.ox,c.axY,right-c.ox+1,1,'#000')+R(right,c.axTop,1,c.axY-c.axTop,'#000');
 for(let i=0;i<c.n;i++){const y=Math.round(c.y0+c.step*i);s+=R(right,y,7,1,'#000')+T(right+7,y+4,(c.p0+c.dp*i).toFixed(c.dec))}
 c.xl.forEach(l=>s+=R(l[0],c.axY,1,7,'#000')+T(l[0]-1,c.ly,l[1],'middle'));
 c.tags.forEach(g=>{const [y,l,f,k,w]=g;s+=`<path d="M${right+1} ${y+.5}l6-6.500h${w-7}v13h-${w-7}z" fill="${f}" stroke="#000"/>`+T(right+7,y+5,l,'start',k)});
 if(c.line){const [y,x,a,col,q,w]=c.line;s+=R(x,y-6,w+45,14,'#000')+R(x+w+1,y-5,43,12,'#0f0')+T(x+w/2+1,y+5,a,'middle',col)+T(x+w+22,y+5,q,'middle','#06410a')}
 (c.marks||[]).forEach(m=>{const [k,x,y,l,ly,ty,tx]=m;
  if(k=='b')s+=`<path d="M${x+.5} ${y}l4 5h-2v9h-4v-9h-2z" fill="#00f"/><path d="M${tx-1} ${ty-4}l5 4.500-5 4.500z" fill="#22e"/>`+T(x,ly,'Buy','middle')+T(x-1,ly+12,l,'middle');
  else s+=`<path d="M${x+.5} ${y}l4-5h-2v-9h-4v9h-2z" fill="#f0f"/><path d="M${tx+2} ${ty-4}l-5 4.500 5 4.500z" fill="#f0f"/>`+T(x-1,ly,'Sell','middle')+T(x,ly+12,l,'middle')});
 if(c.play){const [x,y,f]=c.play;s+=f?`<path d="M${x} ${y}l15 9.500-15 9.500z"/>`+R(x+17,y,3,20,'#000'):`<path d="M${x+.5} ${y+.5}l15 10-15 10z" fill="#fff" stroke="#222"/><path d="M${x+17.5} ${y+.5}h3v20h-3z" fill="#fff" stroke="#000"/>`}
 return `<svg class="plot" height="${c.h}"><g transform="translate(${-c.ox} ${-c.oy})">${s}</g></svg>`;
}
const I=n=>`<svg><use href="#${n}"/></svg>`, C='<span class="crt"></span>', V='<span class="vsep"></span>';
function win(c){
 const id=c.cls, p=c.pos;
 return `<section class="win ${id}">
 <header class="tbar d-flex align-items-center"><svg class="tico"><use href="#chart"/></svg><span class="ttl me-auto">${c.title}</span>
 <div class="d-flex" style="gap:3px"><button class="wbtn lk">L</button><button class="wbtn" aria-label="Minimize">${I('mn')}</button><button class="wbtn" aria-label="Maximize">${I('mx')}</button><button class="wbtn cls" aria-label="Close">${I('x')}</button></div></header>
 <div class="tools d-flex align-items-center"><span class="grip"></span>${V}
 <button class="txt">${c.sym}${C}</button><button class="txt">${c.per}${C}</button>${V}
 <button>${I('cand')}${C}</button><button>${I('pen')}${C}</button><button>${I('zin')}</button><button>${I('zout')}</button>${V}
 <button>${I('cur')}${C}</button><button>${I('page')}</button><span class="vsep tight"></span>
 <button class="on">${I('trade')}</button><button>${I('cbox')}</button><button>${I('lines')}</button><button>${I('dol')}</button><button>${I('lay')}</button></div>
 <div class="d-flex"><div class="flex-fill overflow-hidden">${plot(c)}
 <div class="hsb d-flex align-items-center"><button class="sbb me-auto" aria-label="Scroll left">${I('cl')}</button><span class="sbb thumb ${c.wide?'wide':''}">${c.wide?'<svg><path d="M1 2v6M3 2v6M5 2v6M7 2v6" stroke="#999"/></svg>':''}</span><button class="sbb" aria-label="Scroll right">${I('cr')}</button></div></div>
 <aside class="pnl-side"><div class="pscroll">
 <button class="xpb upb" aria-label="Collapse"><svg width="10" height="6"><path d="M0 6l5-6 5 6z"/></svg></button>
 <div class="ogrid"><button class="obtn buy">BUY<br>MARKET</button><button class="obtn sell">SELL<br>MARKET</button><button class="obtn buy">BUY ASK</button><button class="obtn sell">SELL ASK</button><button class="obtn buy">BUY BID</button><button class="obtn sell">SELL BID</button><button class="obtn wht">REV</button><button class="obtn wht">CLOSE</button></div>
 <div class="pos"><div class="d-flex"><div class="${p?'lime':'wht'}">${p?p[0]:'FLAT'}</div><div class="${p?'bg-white':'wht'}">${p?p[1]:'ENTRY'}</div></div><div class="tot"${p?` style="color:${p[3]}"`:''}>${p?p[2]:'PnL'}</div></div>
 <div class="d-flex lb mt-2 pt-1 mb-1"><label for="${id}-a" style="width:88px" class="text-center">Account</label><label for="${id}-q" class="flex-fill ps-4">Qty</label></div>
 <div class="d-flex gap-2"><div class="sel" style="width:88px"><select id="${id}-a"><option>DU55353</option></select><i>${I('cd')}</i></div><div class="qty"><input id="${id}-q" value="0.01M"><span class="spin"><b></b><b></b></span></div></div>
 <div class="d-flex align-items-center mt-2 pt-1 lb" style="width:151px"><label for="${id}-s" class="me-auto ps-3">ATM Strategy</label><button class="xpb dots">...</button></div>
 <div class="sel mt-1" style="width:152px"><select id="${id}-s"><option>&lt;None&gt;</option></select><i>${I('cd')}</i></div>
 <div class="quote mt-2 pt-1"><span>A: ${c.ask}</span><span>${c.as}</span><span>B: ${c.bid}</span><span>${c.bs}</span></div>
 </div></aside></div></section>`;
}
document.getElementById('desk').insertAdjacentHTML('beforeend',charts.map(win).join(''));
</script>
</body>
</html>
